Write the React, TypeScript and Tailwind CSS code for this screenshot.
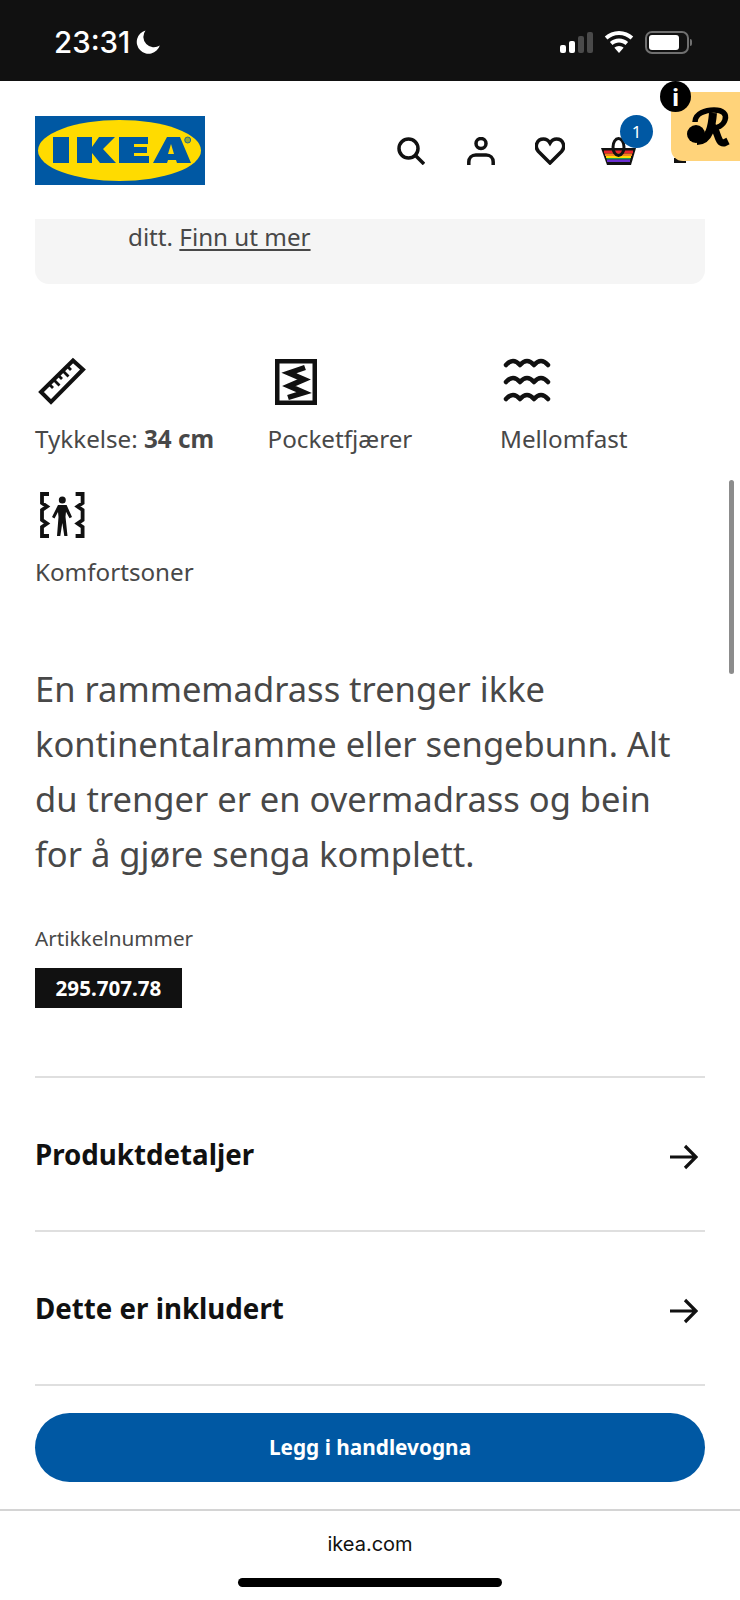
const sans = '[font-family:"Noto_Sans","Open_Sans",sans-serif]'

function Logo() {
    return (
        <svg width="170" height="69" viewBox="0 0 170 69" className="block">
            <rect width="170" height="69" fill="#0058a3" />
            <ellipse cx="84.500" cy="34.500" rx="81.500" ry="30.500" fill="#ffdb00" />
            <path
                fill="#0058a3"
                d="M18 21h16v26H18zM42 21h15v10l7-10h16L68 33l13 14H65l-8-10v10H42zM84 21h29v7H99v3h13v6H99v3h15v7H84zM118 47l14-26h13l11 26h-14l-1-3h-8l-1 3z"
            />
            <path fill="#ffdb00" d="M136 28l-3 10h6z" />
            <circle cx="152.700" cy="24" r="3" fill="#8fa53a" stroke="#0058a3" strokeWidth="0.800" />
        </svg>
    )
}

function Moon() {
    return (
        <svg width="24" height="24" viewBox="0 0 24 24" fill="#fff">
            <path d="M9.500.5A11.800 11.800 0 1 0 23.800 15.500 10.500 10.500 0 0 1 9.500.5z" />
        </svg>
    )
}

function Signal() {
    return (
        <div className="flex items-end gap-[3px] h-[21px]">
            <span className="w-[6px] h-[8px] rounded-[2px] bg-white" />
            <span className="w-[6px] h-[12px] rounded-[2px] bg-white" />
            <span className="w-[6px] h-[17px] rounded-[2px] bg-[#4a4a4a]" />
            <span className="w-[6px] h-[21px] rounded-[2px] bg-[#4a4a4a]" />
        </div>
    )
}

function Wifi() {
    return (
        <svg width="30" height="22" viewBox="0 0 30 22" fill="#fff">
            <path d="M15 0C9.500 0 4.500 2.100.8 5.600l2.600 2.900C6.400 5.600 10.500 3.900 15 3.900s8.600 1.700 11.600 4.600l2.600-2.900C25.500 2.100 20.500 0 15 0z" />
            <path d="M15 7.500c-3.500 0-6.700 1.300-9.100 3.500l2.600 2.900c1.700-1.600 4-2.500 6.500-2.500s4.800.9 6.500 2.500l2.600-2.900c-2.400-2.200-5.600-3.500-9.100-3.500z" />
            <path d="M15 15c-1.800 0-3.400.7-4.600 1.800L15 22l4.600-5.200C18.400 15.700 16.800 15 15 15z" />
        </svg>
    )
}

function Battery() {
    return (
        <div className="flex items-center gap-[1px]">
            <div className="w-[44px] h-[23px] rounded-[7px] border-2 border-[#707070] p-[2px]">
                <div className="w-[30px] h-full rounded-[3px] bg-white" />
            </div>
            <span className="w-[2px] h-[7px] rounded-r-[2px] bg-[#707070]" />
        </div>
    )
}

function Basket() {
    return (
        <svg width="35" height="28" viewBox="0 0 35 28" className="block">
            <path d="M0 11h35l-5 17H6z" fill="#111" />
            <rect x="3" y="13.500" width="29" height="3" fill="#e8262b" />
            <rect x="4" y="16.500" width="27" height="2.500" fill="#f58220" />
            <rect x="5" y="19" width="25" height="2" fill="#ffdb00" />
            <rect x="5.500" y="21" width="24" height="1.500" fill="#1a9e4b" />
            <rect x="6" y="22.500" width="23" height="2.500" fill="#6a2fd0" />
            <ellipse cx="17.500" cy="10" rx="5.500" ry="8.500" fill="none" stroke="#111" strokeWidth="3" />
        </svg>
    )
}

function Ruler() {
    return (
        <svg width="52" height="50" viewBox="0 0 52 50" fill="none" stroke="#111" strokeWidth="4">
            <path d="M6 35 38 3.500l10 9L16 45z" />
            <path strokeWidth="2.800" d="M14 27l4 4M18.500 22.500l6 6M23 18l4 4M27.500 13.500l6 6M32 9l4 4" />
        </svg>
    )
}

function Spring() {
    return (
        <svg width="42" height="46" viewBox="0 0 42 46" fill="none" stroke="#111">
            <rect x="2.250" y="2.250" width="37.500" height="41.500" strokeWidth="4.500" />
            <path strokeWidth="5.500" d="M30 8.500 14 14l15 6.500L14 27l15 6.500-16 5" />
        </svg>
    )
}

function Waves() {
    const wave = 'M2 6Q9-2 16 6 23-2 30 6 37-2 44 6'
    return (
        <svg
            width="46"
            height="44"
            viewBox="0 0 46 44"
            fill="none"
            stroke="#111"
            strokeWidth="4.500"
            strokeLinecap="round"
            strokeLinejoin="round"
            className="overflow-visible"
        >
            <path transform="translate(0 -1)" d={wave} />
            <path transform="translate(0 16)" d={wave} />
            <path transform="translate(0 33)" d={wave} />
        </svg>
    )
}

function Comfort() {
    return (
        <svg width="55" height="48" viewBox="0 0 55 48" fill="none" stroke="#111" strokeWidth="3.800">
            <path d="M14 3H7v9l5 3.500L7 19v10l5 3.500L7 36v9h7" />
            <path d="M40.600 3h7v9l-5 3.500 5 3.500v10l-5 3.500 5 3.500v9h-7" />
            <circle cx="27.300" cy="9" r="3.500" fill="#111" stroke="none" />
            <path
                fill="#111"
                stroke="none"
                d="M23 14h8.600l5.400 12-2.500 1.300-3.500-6.500-.5 5L32.500 45h-3.200l-2-13-2 13H22l1.500-19-.5-5-3.500 6.500L17 26z"
            />
        </svg>
    )
}

function Arrow() {
    return (
        <svg width="28" height="26" viewBox="0 0 28 26" fill="none" stroke="#111" strokeWidth="3.200" className="mt-[6px]">
            <path d="M0 13h26M15 2l11 11-11 11" />
        </svg>
    )
}

function RLogo() {
    return (
        <svg width="42" height="40" viewBox="0 0 42 40" fill="none" stroke="#000" className="overflow-visible">
            <circle cx="10" cy="27" r="9" fill="#000" stroke="none" />
            <path strokeWidth="8" d="M27 6C26 18 24 34 11 34" />
            <path strokeWidth="5.500" d="M9 15C9 6 20 3 28 3 37 3 41 7 39 13 37 19 31 21 26 21" />
            <path strokeWidth="7" d="M26 19C32 22 31 37 38 36L42 34" />
        </svg>
    )
}

function Spec({ icon, children }: { icon: React.ReactNode; children: React.ReactNode }) {
    return (
        <div className="flex flex-col">
            <div className="h-[50px] flex items-center">{icon}</div>
            <div className="mt-[16px] h-[34px] leading-[32px] text-[24.2px] text-[#484848] whitespace-nowrap">
                {children}
            </div>
        </div>
    )
}

function DetailRow({ label }: { label: string }) {
    return (
        <div className="h-[154px] border-b-2 border-[#dfdfdf] flex items-center justify-between pr-[7px]">
            <span className="mt-[2px] text-[27.7px] font-bold text-[#111]">{label}</span>
            <Arrow />
        </div>
    )
}

export default function App() {
    return (
        <div className={`relative w-[740px] h-[1600px] overflow-hidden bg-white flex flex-col ${sans}`}>
            {/* status bar */}
            <div className="h-[81px] shrink-0 bg-[#111] flex items-center justify-between pl-[54px] pr-[48px] pt-[3px]">
                <div className="flex items-center gap-[6px]">
                    <span className="text-[29.5px] font-medium text-white font-['Inter',sans-serif]">23:31</span>
                    <Moon />
                </div>
                <div className="flex items-center gap-[11px]">
                    <Signal />
                    <Wifi />
                    <Battery />
                </div>
            </div>

            {/* header */}
            <div className="h-[138px] shrink-0 flex items-center justify-between pl-[35px]">
                <Logo />
                <div className="flex items-center pr-[104px] pt-[2px]">
                    <svg width="28" height="28" viewBox="0 0 28 28" fill="none" stroke="#111" strokeWidth="3.500">
                        <circle cx="11.500" cy="11.500" r="9.500" />
                        <path d="M18 18l9 9" />
                    </svg>
                    <svg width="28" height="28" viewBox="0 0 28 28" fill="none" stroke="#111" strokeWidth="3.500" className="ml-[42px]">
                        <circle cx="14" cy="6.500" r="5" />
                        <path d="M1.800 28v-3c0-4 3-7 7-7h10.400c4 0 7 3 7 7v3" />
                    </svg>
                    <svg width="30" height="28" viewBox="0 0 30 28" fill="none" stroke="#111" strokeWidth="3.500" className="ml-[40px]">
                        <path d="M15 26 3.500 14.500C-1 9.500 2 2 8.500 2c3 0 5 1.500 6.500 4 1.500-2.500 3.500-4 6.500-4 6.500 0 9.500 7.500 5 12.500z" />
                    </svg>
                    <div className="relative ml-[36px]">
                        <Basket />
                        <span className="absolute -top-[22px] left-[19px] w-[33px] h-[33px] rounded-full bg-[#0058a3] text-white text-[17px] font-normal flex items-center justify-center">
                            1
                        </span>
                    </div>
                </div>
            </div>

            {/* floating badge */}
            <span className="absolute left-[674px] top-[158px] w-[12px] h-[5px] bg-[#111]" />
            <div className="absolute left-[671px] top-[92px] w-[69px] h-[69px] bg-[#ffd37a] rounded-bl-[12px] pl-[15px] pt-[15px]">
                <RLogo />
            </div>
            <span className="absolute left-[660px] top-[81px] w-[31px] h-[31px] rounded-full bg-black text-white flex items-center justify-center text-[24px] font-bold leading-none">
                i
            </span>

            {/* main content */}
            <div className="flex-1 min-h-0 px-[35px] flex flex-col overflow-hidden">
                <div className="h-[65px] shrink-0 bg-[#f5f5f5] rounded-b-[14px] pl-[93px] text-[24.2px] text-[#484848] leading-[36px]">
                    ditt. <span className="underline underline-offset-[3px]">Finn ut mer</span>
                </div>

                <div className="mt-[73px] grid grid-cols-[232.500px_232.500px_1fr] gap-y-[33px]">
                    <Spec icon={<Ruler />}>
                        Tykkelse: <b>34 cm</b>
                    </Spec>
                    <Spec icon={<div className="pl-[7px]"><Spring /></div>}>Pocketfjærer</Spec>
                    <Spec icon={<div className="pl-[4px]"><Waves /></div>}>Mellomfast</Spec>
                    <Spec icon={<Comfort />}>Komfortsoner</Spec>
                </div>

                <p className="mt-[71px] text-[34.5px] leading-[55px] text-[#484848]">
                    En rammemadrass trenger ikke kontinentalramme eller sengebunn. Alt du trenger er en overmadrass og bein for å gjøre senga komplett.
                </p>

                <div className="mt-[42px] text-[20.7px] leading-[30px] text-[#484848]">Artikkelnummer</div>
                <div className="mt-[15px] w-[147px] h-[40px] bg-[#111] text-white text-[20.6px] font-bold flex items-center justify-center">
                    295.707.78
                </div>

                <div className="mt-[68px] border-t-2 border-[#dfdfdf]">
                    <DetailRow label="Produktdetaljer" />
                    <DetailRow label="Dette er inkludert" />
                </div>

                <div className="mt-[27px] h-[69px] shrink-0 rounded-full bg-[#0058a3] text-white text-[20.8px] font-bold flex items-center justify-center">
                    Legg i handlevogna
                </div>
            </div>

            {/* browser bar */}
            <div className="h-[91px] shrink-0 border-t-2 border-[#d4d4d4] flex flex-col items-center">
                <span className="mt-[19px] text-[20px] leading-[28px] text-[#111] font-['Inter',sans-serif]">ikea.com</span>
                <span className="mt-[20px] w-[264px] h-[9px] rounded-full bg-black" />
            </div>

            {/* scroll thumb */}
            <span className="absolute left-[729px] top-[480px] w-[5px] h-[194px] rounded-full bg-[#8c8c8c]" />
        </div>
    )
}
